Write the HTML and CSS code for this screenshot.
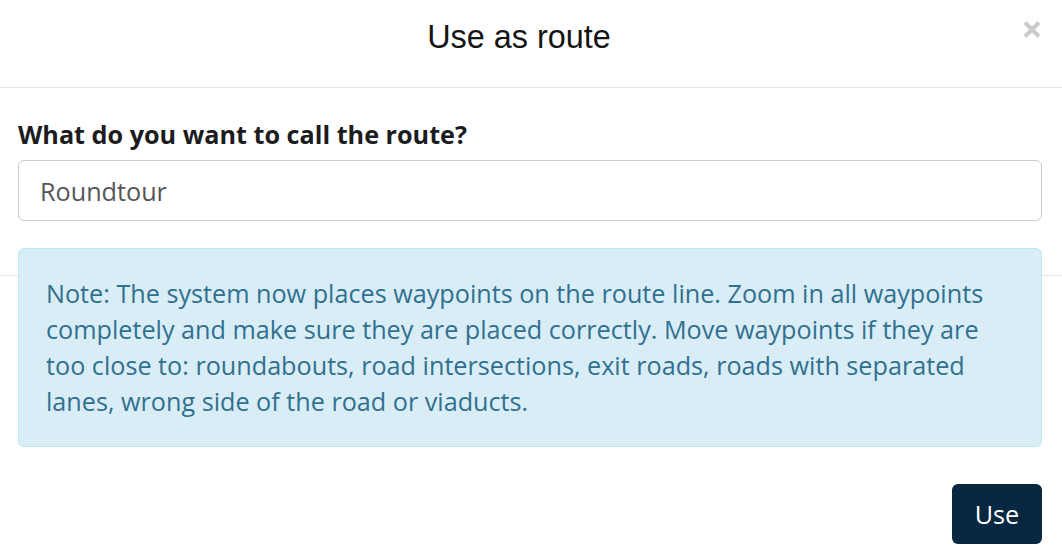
FILE: index.html
```html
<!DOCTYPE html>
<html lang="en">
<head>
<meta charset="utf-8">
<title>Use as route</title>
<link rel="stylesheet" href="styles.css">
</head>
<body>
<div class="modal">
  <div class="modal-header">
    <h4 class="modal-title">Use as route</h4>
    <button class="close" type="button" aria-label="Close">
      <svg width="18" height="17" viewBox="0 0 18 17" aria-hidden="true">
        <path d="M2 1.5 L16 15.5 M16 1.5 L2 15.5" stroke="#cbcbcb" stroke-width="4" fill="none"/>
      </svg>
    </button>
  </div>
  <div class="modal-body">
    <label class="field-label" for="routeName">What do you want to call the route?</label>
    <input class="form-control" id="routeName" type="text" value="Roundtour">
  </div>
  <div class="modal-footer">
    <div class="alert">Note: The system now places waypoints on the route line. Zoom in all waypoints completely and make sure they are placed correctly. Move waypoints if they are too close to: roundabouts, road intersections, exit roads, roads with separated lanes, wrong side of the road or viaducts.</div>
    <div class="actions">
      <button class="btn-primary" type="button">Use</button>
    </div>
  </div>
</div>
</body>
</html>
```
FILE: styles.css
```css
html, body {
  margin: 0;
  padding: 0;
  background: #ffffff;
}
body {
  font-family: "Open Sans", "Liberation Sans", Arial, sans-serif;
  font-size: 25.2px;
  line-height: 36px;
  color: #222222;
}
.modal {
  width: 1062px;
}
.modal-header {
  display: flex;
  align-items: flex-start;
  height: 88px;
  box-sizing: border-box;
  padding: 19px 18px 0 18px;
  border-bottom: 1px solid #e5e5e5;
}
.modal-title {
  flex: 1;
  margin: 0;
  text-align: center;
  font-family: "Liberation Sans", Arial, sans-serif;
  font-weight: normal;
  font-size: 32.4px;
  line-height: 36px;
  color: #151515;
}
.close {
  width: 24px;
  height: 24px;
  padding: 2px 0 0 0;
  border: 0;
  background: transparent;
  display: flex;
  align-items: flex-start;
  justify-content: center;
  box-sizing: content-box;
  cursor: pointer;
}
.modal-body {
  padding: 28px 20px 54px 18px;
  display: flex;
  flex-direction: column;
}
.field-label {
  font-weight: 700;
  font-size: 25.2px;
  line-height: 36px;
  color: #1c1c1e;
  margin-bottom: 8px;
}
.form-control {
  display: block;
  width: 100%;
  box-sizing: border-box;
  height: 61px;
  padding: 11px 21px;
  border: 1px solid #cccccc;
  border-radius: 6px;
  font-family: "Open Sans", "Liberation Sans", Arial, sans-serif;
  font-size: 25.2px;
  line-height: 36px;
  color: #555555;
  background: #ffffff;
  margin: 0;
  outline: none;
}
.modal-footer {
  border-top: 1px solid #e5e5e5;
  padding: 0 20px 16px 18px;
}
.alert {
  margin-top: -28px;
  padding: 26px 27px 27px 27px;
  background: #d9edf7;
  border: 1px solid #bce8f1;
  border-radius: 6px;
  color: #31708f;
  font-size: 25.2px;
  line-height: 36px;
}
.actions {
  display: flex;
  justify-content: flex-end;
  margin-top: 37px;
}
.btn-primary {
  width: 90px;
  height: 60px;
  padding: 0;
  border: 0;
  border-radius: 6px;
  background: #072840;
  color: #ffffff;
  font-family: "Open Sans", "Liberation Sans", Arial, sans-serif;
  font-size: 25.2px;
  line-height: 36px;
  cursor: pointer;
}
```
